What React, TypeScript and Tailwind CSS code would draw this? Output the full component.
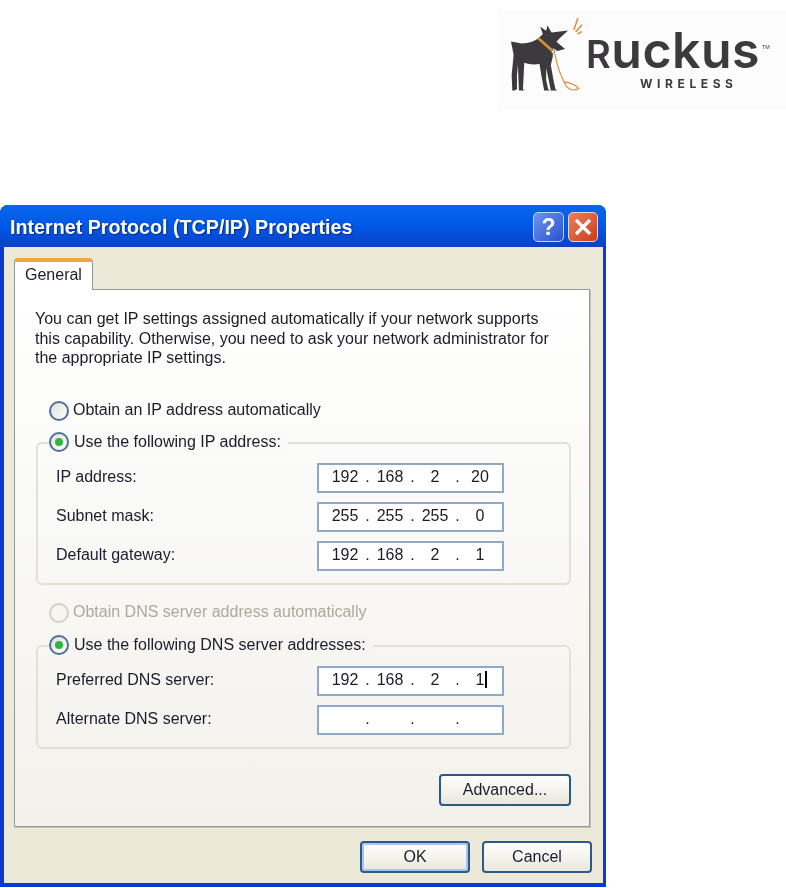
import React from "react";

const uiFont = "font-['Liberation_Sans',sans-serif]";

// dog + leash from the logo, traced by eye
const RuckusDog = () => (
  <svg width="73" height="80" viewBox="60 45 220 240" className="shrink-0">
    <path
      d="M66 124 L98 130 Q130 130 150 114 L162 102 L154 80 L172 92 L176 76 L188 97 L238 91 L214 113 L203 125 L229 147 L206 153 L192 145 L192 170 L186 195 L194 240 L200 268 L206 272 L186 272 L178 232 L172 205 L172 240 L178 268 L184 272 L166 272 L158 230 L152 192 Q125 196 106 188 L104 230 L102 268 L108 272 L90 272 L88 225 L87 195 L84 225 L84 268 L76 272 L70 272 L68 225 L74 165 Z"
      fill="#3c3a3c"
    />
    <g fill="none" stroke="#d98f3a" strokeLinecap="round">
      <path d="M150 116 L188 150" strokeWidth="8" />
      <circle cx="193" cy="155" r="5" strokeWidth="3" fill="#fff" stroke="#8a7a66" />
      <path d="M198 162 Q208 215 232 258 Q250 278 270 266 Q255 250 228 246" strokeWidth="3.5" />
      <path d="M256 88 L267 55" strokeWidth="4.5" />
      <path d="M262 94 L286 68" strokeWidth="4.5" />
      <path d="M268 101 L298 84" strokeWidth="4.5" />
    </g>
  </svg>
);

const Logo = () => (
  <div className="flex justify-end h-[205px]">
    <div className="flex w-[288px] h-[100px] mt-[10px] pl-[11px] pt-[5px] bg-[#fcfcfc] blur-[0.4px]">
      <RuckusDog />
      <div className="relative ml-[4px] font-['Inter',sans-serif] text-[#3c3a3c]">
        <div className="h-[52px] mt-[9px] flex items-baseline leading-[52px] font-semibold tracking-[0.5px]">
          <span className="text-[38px]">R</span>
          <span className="text-[50px]">uckus</span>
        </div>
        <div className="ml-[54px] mt-[2px] text-[12px] leading-[12px] font-bold tracking-[4.6px] whitespace-nowrap">
          WIRELESS
        </div>
        <span className="absolute left-[176px] top-[29px] text-[5px] leading-[6px]">TM</span>
      </div>
    </div>
  </div>
);

const Radio = ({ checked = false, disabled = false }: { checked?: boolean; disabled?: boolean }) => (
  <span
    className={
      disabled
        ? "flex items-center justify-center shrink-0 w-[20px] h-[20px] rounded-full border-2 border-[#d2d1c8] bg-[#f6f5f1]"
        : "flex items-center justify-center shrink-0 w-[20px] h-[20px] rounded-full border-2 border-[#4f7096] bg-gradient-to-br from-[#e0e0da] to-white"
    }
  >
    {checked && <span className="w-[8px] h-[8px] rounded-full bg-[#2fb544]" />}
  </span>
);

// the four octets sit on a fixed pitch like the real XP control
const IpInput = ({ value, caret = false }: { value: string[]; caret?: boolean }) => (
  <div className="flex h-[30px] w-[187px] pl-[8px] pb-[1px] items-center border-2 border-[#8fa8c6] bg-white text-[16px] text-[#1c1c2a]">
    {value.map((octet, i) => (
      <React.Fragment key={i}>
        <span className="relative w-[36px] text-center">
          {octet}
          {caret && i === 3 && (
            <span className="absolute left-[23px] top-[1px] w-[2px] h-[17px] bg-black" />
          )}
        </span>
        {i < 3 && <span className="w-[9px] text-center">.</span>}
      </React.Fragment>
    ))}
  </div>
);

const FieldRow = ({ label, value, caret }: { label: string; value: string[]; caret?: boolean }) => (
  <div className="flex items-center">
    <span className="w-[261px] -mt-[1px]">{label}</span>
    <IpInput value={value} caret={caret} />
  </div>
);

const GroupBox = ({ legend, bg, children }: { legend: string; bg: string; children: React.ReactNode }) => (
  <div className="relative ml-[21px] w-[535px] rounded-[6px] border-2 border-[#e2e1d6] pt-[19px] pb-[12px] pl-[18px] flex flex-col gap-[9px]">
    <div className={"absolute left-[11px] -top-[12px] h-[20px] flex items-center gap-[5px] pr-[7px] " + bg}>
      <Radio checked />
      <span>{legend}</span>
    </div>
    {children}
  </div>
);

const XpButton = ({ label, focused = false, width }: { label: string; focused?: boolean; width: string }) => (
  <button
    className={
      "h-[32px] rounded-[4px] border-2 border-[#2a5a88] text-[16px] text-[#1c1c2a] bg-gradient-to-b from-white to-[#e9e7dc] " +
      width +
      (focused ? " shadow-[inset_0_0_0_2px_#a9c4ee]" : "")
    }
  >
    {label}
  </button>
);

export default function App() {
  return (
    <div className={"w-[786px] h-[888px] bg-white overflow-hidden " + uiFont}>
      <Logo />

      {/* dialog window */}
      <div className="w-[606px] h-[682px] flex flex-col rounded-t-[8px] bg-[#0a3ad0] pl-[4px] pr-[3px] pb-[4px] blur-[0.4px]">
        <div className="h-[42px] -ml-[4px] -mr-[3px] px-[8px] flex items-center rounded-t-[8px] bg-gradient-to-b from-[#0a66ee] via-[#0058e6] to-[#0a41c8]">
          <span className="flex-1 pl-[2px] pt-[3px] text-[19.7px] font-bold text-white [text-shadow:1px_1px_1px_#0a2a90]">
            Internet Protocol (TCP/IP) Properties
          </span>
          <div className="flex gap-[4px] pt-[2px]">
            <span className="w-[31px] h-[30px] flex items-center justify-center rounded-[5px] border border-[#c5d4f5] bg-gradient-to-br from-[#6d93f0] to-[#2a52cc] text-white text-[23px] font-bold">
              ?
            </span>
            <span className="w-[30px] h-[30px] flex items-center justify-center rounded-[5px] border border-[#e9d6cc] bg-gradient-to-br from-[#ee7e58] to-[#c93c16]">
              <svg width="18" height="18" viewBox="0 0 18 18">
                <path d="M2 2 L16 16 M16 2 L2 16" stroke="#fff" strokeWidth="3.2" />
              </svg>
            </span>
          </div>
        </div>

        <div className="flex-1 bg-[#ece9d8] pt-[11px] pl-[10px] pr-[13px] text-[16px] leading-[19.5px] text-[#1c1c2a]">
          {/* tab */}
          <div className="relative z-10 -mb-px w-[79px] h-[32px] flex items-center pl-[10px] pb-[3px] rounded-t-[4px] border-x border-x-[#919b9c] border-t-[4px] border-t-[#f0a63c] bg-white">
            General
          </div>

          <div className="h-[538px] border border-[#919b9c] shadow-[1px_1px_0_#c4c3b4] bg-gradient-to-b from-white to-[#f2f1ec] flex flex-col">
            <p className="pl-[20px] pt-[19px] whitespace-pre-line">
              {"You can get IP settings assigned automatically if your network supports\nthis capability. Otherwise, you need to ask your network administrator for\nthe appropriate IP settings."}
            </p>

            <div className="mt-[33px] ml-[34px] h-[20px] flex items-center gap-[4px]">
              <Radio />
              <span className="-mt-[2px]">Obtain an IP address automatically</span>
            </div>

            <div className="mt-[21px]">
              <GroupBox legend="Use the following IP address:" bg="bg-[#fafaf8]">
                <FieldRow label="IP address:" value={["192", "168", "2", "20"]} />
                <FieldRow label="Subnet mask:" value={["255", "255", "255", "0"]} />
                <FieldRow label="Default gateway:" value={["192", "168", "2", "1"]} />
              </GroupBox>
            </div>

            <div className="mt-[18px] ml-[34px] h-[20px] flex items-center gap-[4px] text-[#aaa99d]">
              <Radio disabled />
              <span className="-mt-[2px]">Obtain DNS server address automatically</span>
            </div>

            <div className="mt-[22px]">
              <GroupBox legend="Use the following DNS server addresses:" bg="bg-[#f6f5f2]">
                <FieldRow label="Preferred DNS server:" value={["192", "168", "2", "1"]} caret />
                <FieldRow label="Alternate DNS server:" value={["", "", "", ""]} />
              </GroupBox>
            </div>

            <div className="mt-[25px] mr-[18px] flex justify-end">
              <XpButton label="Advanced..." width="w-[132px]" />
            </div>
          </div>

          <div className="mt-[14px] -mr-[2px] flex justify-end gap-[12px]">
            <XpButton label="OK" width="w-[110px]" focused />
            <XpButton label="Cancel" width="w-[110px]" />
          </div>
        </div>
      </div>
    </div>
  );
}
